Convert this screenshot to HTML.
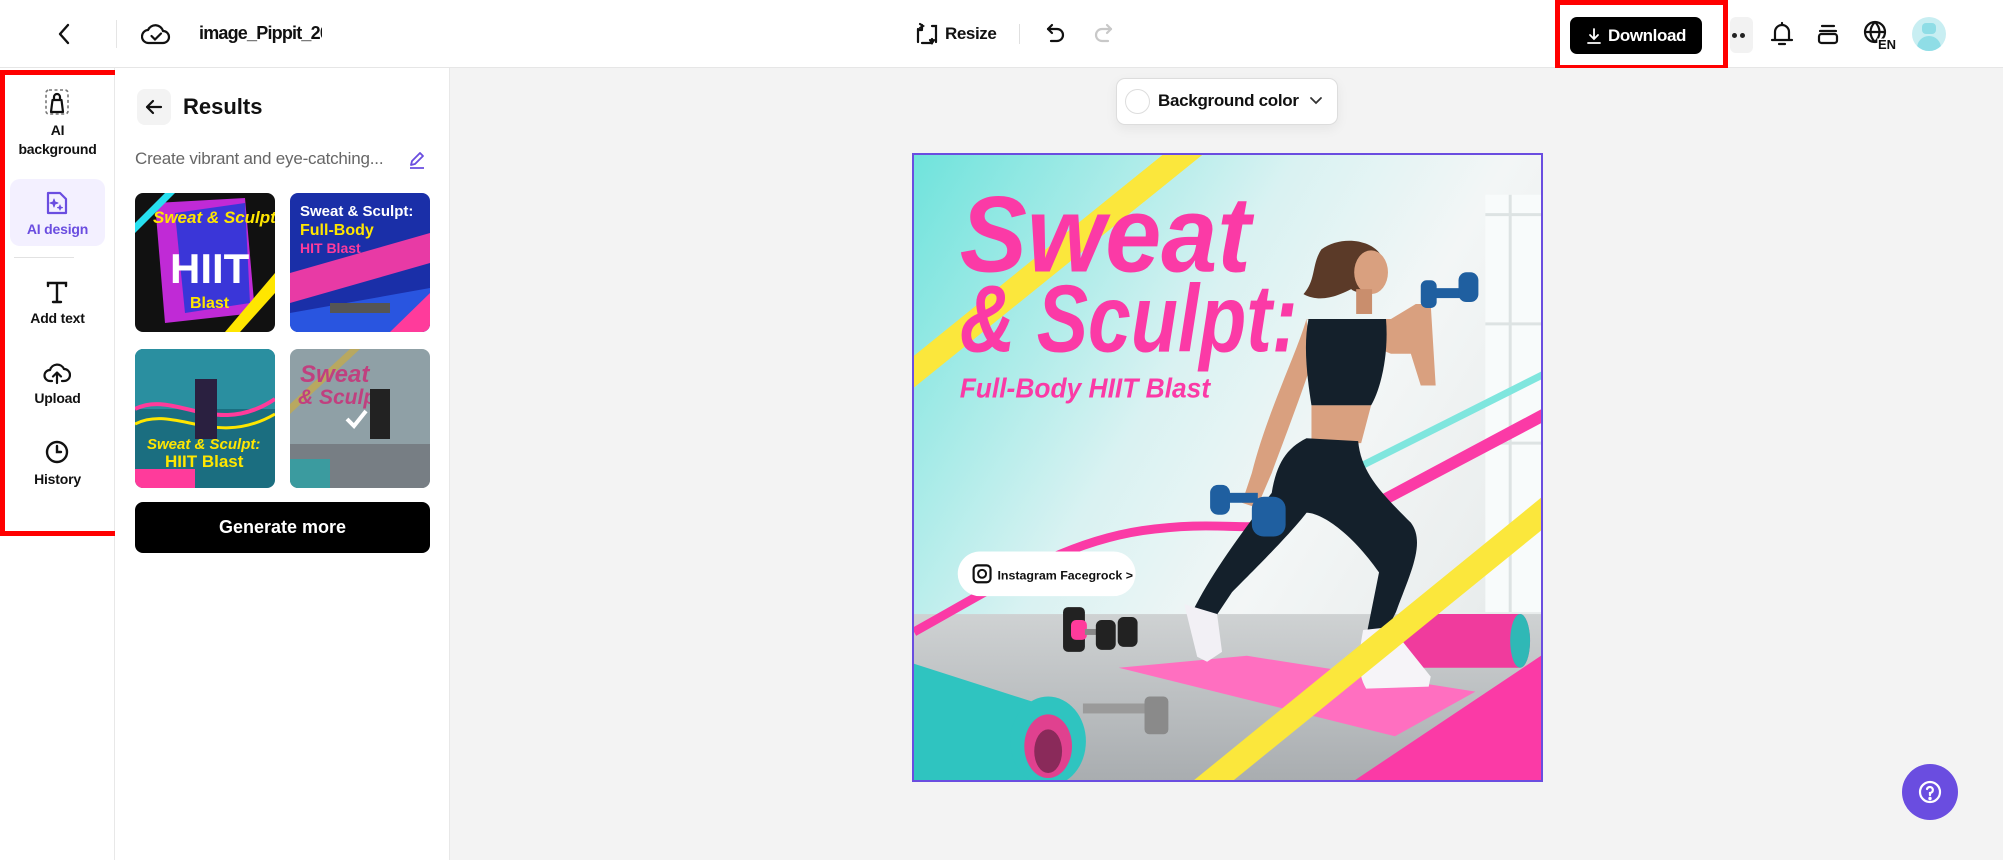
<!DOCTYPE html>
<html><head><meta charset="utf-8"><style>
*{box-sizing:border-box;margin:0;padding:0}
body{width:2003px;height:860px;overflow:hidden;background:#fff;font-family:"Liberation Sans",sans-serif;position:relative;color:#111}
.abs{position:absolute}
.hdr{left:0;top:0;width:2003px;height:68px;border-bottom:1px solid #e6e6e6;background:#fff}
.side{left:0;top:68px;width:115px;height:792px;border-right:1px solid #e8e8e8;background:#fff}
.panel{left:115px;top:68px;width:335px;height:792px;border-right:1px solid #e8e8e8;background:#fff}
.canvas{left:450px;top:68px;width:1553px;height:792px;background:#f3f3f3}
.lbl{width:115px;text-align:center;font-size:14px;font-weight:bold;color:#111;line-height:19px;letter-spacing:-0.2px}
.thumb{width:140px;height:139px;border-radius:8px;overflow:hidden}
</style></head><body>
<div class="abs hdr"></div>
<svg class="abs" style="left:54px;top:22px" width="22" height="24" viewBox="0 0 22 24"><path d="M14 3 L6 12 L14 21" fill="none" stroke="#111" stroke-width="2.4" stroke-linecap="round" stroke-linejoin="round"/></svg>
<div class="abs" style="left:116px;top:20px;width:1px;height:28px;background:#e5e5e5"></div>
<svg class="abs" style="left:141px;top:21px" width="30" height="26" viewBox="0 0 30 26"><path d="M8 22 H22 A6 6 0 0 0 22 10 A8 8 0 0 0 7 9 A6.5 6.5 0 0 0 8 22Z" fill="none" stroke="#111" stroke-width="2.2"/><path d="M10.5 15 L14 18.5 L20 12.5" fill="none" stroke="#111" stroke-width="2.2" stroke-linecap="round"/></svg>
<div class="abs" style="left:199px;top:23px;width:123px;overflow:hidden;white-space:nowrap;font-size:18px;font-weight:bold;color:#111;letter-spacing:-0.8px">image_Pippit_2025</div>
<svg class="abs" style="left:915px;top:22px" width="24" height="24" viewBox="0 0 24 24" fill="none" stroke="#111" stroke-width="2.2" stroke-linecap="round"><path d="M3 7 V20 M3 8 H7 M17 4 H21 V20 M7 21 H17 M7 3 L7 7 M17 17 V21"/><path d="M5 2 L8 4 L5 6" /><path d="M19 18 L17 21 L15 18"/></svg>
<div class="abs" style="left:945px;top:24px;font-size:17px;font-weight:bold;letter-spacing:-0.4px">Resize</div>
<div class="abs" style="left:1019px;top:24px;width:1px;height:20px;background:#e0e0e0"></div>
<svg class="abs" style="left:1044px;top:22px" width="24" height="24" viewBox="0 0 24 24" fill="none" stroke="#111" stroke-width="2.2" stroke-linecap="round" stroke-linejoin="round"><path d="M8 3 L4 7 L8 11"/><path d="M4 7 H13 A6 6 0 0 1 13 19 H7"/></svg>
<svg class="abs" style="left:1091px;top:22px" width="24" height="24" viewBox="0 0 24 24" fill="none" stroke="#c8c8c8" stroke-width="2.2" stroke-linecap="round" stroke-linejoin="round"><path d="M16 3 L20 7 L16 11"/><path d="M20 7 H11 A6 6 0 0 0 11 19 H17"/></svg>
<div class="abs" style="left:1555px;top:0;width:173px;height:70px;border:5px solid #f00"></div>
<div class="abs" style="left:1570px;top:17px;width:132px;height:37px;background:#000;border-radius:7px;color:#fff;font-weight:bold;font-size:17px;line-height:37px;text-align:left;padding-left:38px;letter-spacing:-0.4px">Download</div>
<svg class="abs" style="left:1586px;top:27px" width="16" height="18" viewBox="0 0 16 18" fill="none" stroke="#fff" stroke-width="1.8" stroke-linecap="round"><path d="M8 2 V11 M4 8 L8 12 L12 8 M2 16 H14"/></svg>
<div class="abs" style="left:1730px;top:17px;width:23px;height:36px;background:#f2f2f2;border-radius:6px"></div>
<div class="abs" style="left:1732px;top:33px;width:5px;height:5px;border-radius:3px;background:#222"></div>
<div class="abs" style="left:1740px;top:33px;width:5px;height:5px;border-radius:3px;background:#222"></div>
<svg class="abs" style="left:1768px;top:20px" width="28" height="28" viewBox="0 0 28 28" fill="none" stroke="#111" stroke-width="2.2" stroke-linecap="round"><path d="M7 20 V12 A7 7 0 0 1 21 12 V20 M4 20 H24 M11 24 H17 M14 3 V5"/></svg>
<svg class="abs" style="left:1815px;top:21px" width="26" height="26" viewBox="0 0 26 26" fill="none" stroke="#111" stroke-width="2.2" stroke-linecap="round"><path d="M7 5 H19 M5 10 H21"/><rect x="4" y="13" width="18" height="9" rx="2.5"/></svg>
<svg class="abs" style="left:1862px;top:19px" width="36" height="32" viewBox="0 0 36 32" fill="none" stroke="#111" stroke-width="2.2"><circle cx="13" cy="13" r="10"/><path d="M3 13 H23 M13 3 C7 9 7 17 13 23 M13 3 C19 9 19 17 13 23"/><text x="16" y="30" font-family="Liberation Sans" font-weight="bold" font-size="13" fill="#111" stroke="#fff" stroke-width="3" paint-order="stroke">EN</text></svg>
<div class="abs" style="left:1912px;top:17px;width:34px;height:34px;border-radius:50%;background:#c8eef2;overflow:hidden"><div class="abs" style="left:10px;top:6px;width:14px;height:11px;border-radius:4px;background:#8fdde6"></div><div class="abs" style="left:5px;top:19px;width:24px;height:18px;border-radius:12px 12px 0 0;background:#8fdde6"></div></div>

<div class="abs side"></div>
<div class="abs" style="left:0;top:70px;width:128px;height:466px;border:5px solid #f00"></div>
<svg class="abs" style="left:44px;top:88px" width="26" height="28" viewBox="0 0 26 28" fill="none" stroke="#111"><rect x="2" y="2" width="22" height="24" rx="3" stroke-dasharray="3 2.5" stroke-width="1.6" stroke="#777"/><path d="M7 24 L8.5 12 H17.5 L19 24 Z M10 12 V9 A3 3 0 0 1 16 9 V12" stroke-width="2.2" stroke-linejoin="round"/></svg>
<div class="abs lbl" style="left:0;top:121px;line-height:19px">AI<br>background</div>
<div class="abs" style="left:10px;top:179px;width:95px;height:67px;border-radius:10px;background:#f3f0ff"></div>
<svg class="abs" style="left:44px;top:190px" width="26" height="26" viewBox="0 0 26 26" fill="none" stroke="#6a4de0" stroke-width="2.2" stroke-linejoin="round"><path d="M4 3 H16 L22 9 V23 H4 Z"/><path d="M10 9 L11 12 L14 13 L11 14 L10 17 L9 14 L6 13 L9 12Z M16 15 L16.6 17 L18.5 17.6 L16.6 18.2 L16 20 L15.4 18.2 L13.5 17.6 L15.4 17Z" fill="#6a4de0" stroke-width="1"/></svg>
<div class="abs lbl" style="left:0;top:220px;color:#6a4de0">AI design</div>
<div class="abs" style="left:14px;top:257px;width:60px;height:1px;background:#e2e2e2"></div>
<svg class="abs" style="left:44px;top:279px" width="26" height="26" viewBox="0 0 26 26" fill="none" stroke="#111" stroke-width="2.4" stroke-linecap="round"><path d="M4 7 V4 H22 V7 M13 4 V23 M9 23 H17"/></svg>
<div class="abs lbl" style="left:0;top:309px">Add text</div>
<svg class="abs" style="left:43px;top:360px" width="28" height="26" viewBox="0 0 28 26" fill="none" stroke="#111" stroke-width="2.2" stroke-linecap="round" stroke-linejoin="round"><path d="M9 21 H7 A5.5 5.5 0 0 1 7 10 A7.5 7.5 0 0 1 21 9 A5.5 5.5 0 0 1 21 21 H19"/><path d="M14 23 V13 M10 16.5 L14 12.5 L18 16.5"/></svg>
<div class="abs lbl" style="left:0;top:389px">Upload</div>
<svg class="abs" style="left:44px;top:439px" width="26" height="26" viewBox="0 0 26 26" fill="none" stroke="#111" stroke-width="2.4" stroke-linecap="round"><circle cx="13" cy="13" r="10"/><path d="M13 7 V13 H17"/></svg>
<div class="abs lbl" style="left:0;top:470px">History</div>

<div class="abs panel"></div>
<div class="abs" style="left:137px;top:89px;width:34px;height:36px;border-radius:8px;background:#f3f3f3"></div>
<svg class="abs" style="left:144px;top:97px" width="20" height="20" viewBox="0 0 20 20" fill="none" stroke="#111" stroke-width="2.2" stroke-linecap="round" stroke-linejoin="round"><path d="M17 10 H3 M9 4 L3 10 L9 16"/></svg>
<div class="abs" style="left:183px;top:94px;font-size:22px;font-weight:bold">Results</div>
<div class="abs" style="left:135px;top:149px;font-size:17px;color:#666;letter-spacing:-0.2px">Create vibrant and eye-catching...</div>
<svg class="abs" style="left:408px;top:151px" width="18" height="18" viewBox="0 0 18 18" fill="none" stroke="#6a4de0" stroke-width="1.8" stroke-linejoin="round"><path d="M3 14 L4 10 L12 2 L15 5 L7 13 Z M2 17 H16"/></svg>

<svg class="abs thumb" style="left:135px;top:193px" viewBox="0 0 140 139"><rect width="140" height="139" fill="#111"/><polygon points="20,10 110,5 120,120 30,130" fill="#c02ad6"/><polygon points="40,20 110,10 115,110 50,120" fill="#3a36d8"/><polygon points="0,30 30,0 40,0 0,40" fill="#27e0f0"/><polygon points="90,139 140,80 140,100 105,139" fill="#ffe600"/><text x="18" y="30" font-family="Liberation Sans" font-weight="bold" font-style="italic" font-size="17" fill="#ffe600">Sweat &amp; Sculpt:</text><text x="35" y="90" font-family="Liberation Sans" font-weight="bold" font-size="42" fill="#fff">HIIT</text><text x="55" y="115" font-family="Liberation Sans" font-weight="bold" font-size="16" fill="#ffe600">Blast</text></svg>
<svg class="abs thumb" style="left:290px;top:193px" viewBox="0 0 140 139"><rect width="140" height="139" fill="#1a2fa8"/><polygon points="0,80 140,40 140,70 0,110" fill="#e83aa5"/><polygon points="0,120 140,95 140,139 0,139" fill="#2955e0"/><polygon points="100,139 140,100 140,139" fill="#ff3b9b"/><text x="10" y="23" font-family="Liberation Sans" font-weight="bold" font-size="15" fill="#fff">Sweat &amp; Sculpt:</text><text x="10" y="42" font-family="Liberation Sans" font-weight="bold" font-size="16" fill="#ffe600">Full-Body</text><text x="10" y="60" font-family="Liberation Sans" font-weight="bold" font-size="14" fill="#ff3b9b">HIT Blast</text><rect x="40" y="110" width="60" height="10" fill="#555"/></svg>
<svg class="abs thumb" style="left:135px;top:349px" viewBox="0 0 140 139"><rect width="140" height="139" fill="#1b6e80"/><rect width="140" height="60" fill="#2a8fa0"/><path d="M0 60 C40 40 80 90 140 50" stroke="#ff3b9b" stroke-width="4" fill="none"/><path d="M0 75 C40 55 80 100 140 65" stroke="#ffe600" stroke-width="3" fill="none"/><rect x="60" y="30" width="22" height="60" fill="#2a2040"/><text x="12" y="100" font-family="Liberation Sans" font-weight="bold" font-style="italic" font-size="15" fill="#ffe600">Sweat &amp; Sculpt:</text><text x="30" y="118" font-family="Liberation Sans" font-weight="bold" font-size="17" fill="#ffe600">HIIT Blast</text><rect x="0" y="120" width="60" height="19" fill="#ff3b9b"/></svg>
<svg class="abs thumb" style="left:290px;top:349px" viewBox="0 0 140 139"><rect width="140" height="139" fill="#8fa0a6"/><rect y="95" width="140" height="44" fill="#777e84"/><polygon points="0,55 60,0 70,0 0,65" fill="#b8a860"/><text x="10" y="33" font-family="Liberation Sans" font-weight="bold" font-style="italic" font-size="24" fill="#c0407f">Sweat</text><text x="8" y="55" font-family="Liberation Sans" font-weight="bold" font-style="italic" font-size="21" fill="#c0407f">&amp; Sculpt:</text><rect x="80" y="40" width="20" height="50" fill="#222"/><rect x="0" y="110" width="40" height="29" fill="#3b9b9f"/><path d="M57 70 L64 77 L76 62" stroke="#fff" stroke-width="4" fill="none"/></svg>

<div class="abs" style="left:135px;top:502px;width:295px;height:51px;border-radius:8px;background:#000;color:#fff;font-weight:bold;font-size:18px;text-align:center;line-height:51px">Generate more</div>

<div class="abs canvas"></div>
<div class="abs" style="left:1116px;top:78px;width:222px;height:47px;border-radius:9px;background:#fff;border:1px solid #ddd;box-shadow:0 4px 12px rgba(0,0,0,0.06)"></div>
<div class="abs" style="left:1125px;top:89px;width:25px;height:25px;border-radius:50%;border:1px solid #ddd"></div>
<div class="abs" style="left:1158px;top:91px;font-size:17px;font-weight:bold;letter-spacing:-0.3px">Background color</div>
<svg class="abs" style="left:1308px;top:94px" width="16" height="14" viewBox="0 0 16 14" fill="none" stroke="#333" stroke-width="1.8" stroke-linecap="round"><path d="M3 4 L8 9 L13 4"/></svg>

<svg class="abs" style="left:912px;top:153px;border:2px solid #6a4de0" width="631" height="629" viewBox="0 0 631 629">
<defs>
<linearGradient id="wall" x1="0" y1="0" x2="1" y2="0.6"><stop offset="0" stop-color="#6fe3dc"/><stop offset="0.45" stop-color="#d9f2f2"/><stop offset="0.7" stop-color="#f3f6f6"/><stop offset="1" stop-color="#e8ecec"/></linearGradient>
<linearGradient id="floor" x1="0" y1="0" x2="0" y2="1"><stop offset="0" stop-color="#cfd2d3"/><stop offset="1" stop-color="#a9adb0"/></linearGradient>
</defs>
<rect width="631" height="629" fill="url(#wall)"/>
<rect x="575" y="40" width="56" height="420" fill="#f8fbfb"/><path d="M575 60 H631 M575 170 H631 M575 290 H631 M600 40 V460" stroke="#dde3e3" stroke-width="3"/>
<rect y="462" width="631" height="167" fill="url(#floor)"/>
<polygon points="0,202 250,0 290,0 0,234" fill="#fbe73c"/>
<path d="M0 480 C90 430 150 390 230 378 C300 368 330 378 360 372" stroke="#fb3aa6" stroke-width="9" fill="none"/>
<polygon points="444,312 631,218 631,226 444,320" fill="#7fe6de"/>
<polygon points="468,343 631,256 631,270 468,356" fill="#fb3aa6"/>
<rect x="150" y="455" width="22" height="45" rx="5" fill="#222"/><rect x="158" y="468" width="16" height="20" rx="5" fill="#ff3b9b"/><rect x="172" y="477" width="25" height="6" fill="#888"/><rect x="183" y="468" width="20" height="30" rx="6" fill="#222"/><rect x="205" y="465" width="20" height="30" rx="6" fill="#222"/>
<polygon points="206,516 335,504 565,540 484,585" fill="#ff6fc0"/>
<path d="M488 462 H610 A10 27 0 0 1 610 516 H488 Z" fill="#f03b9d"/><ellipse cx="610" cy="489" rx="10" ry="27" fill="#2fb8b6"/>
<rect x="170" y="552" width="70" height="10" fill="#9a9a9a"/><rect x="232" y="545" width="24" height="38" rx="5" fill="#8a8a8a"/>
<path d="M0 512 L150 560 A30 45 0 0 1 150 629 L0 629Z" fill="#2fc4c0"/><ellipse cx="135" cy="590" rx="38" ry="45" fill="#2fc4c0"/><ellipse cx="135" cy="595" rx="24" ry="32" fill="#e0418f"/><ellipse cx="135" cy="600" rx="14" ry="22" fill="#8a2a5a"/>
<g>
<path d="M410 95 C430 80 465 85 472 105 L470 130 C460 140 445 140 440 135 C430 140 410 150 392 140 C405 125 400 110 410 95Z" fill="#5b3a28"/>
<ellipse cx="460" cy="118" rx="17" ry="22" fill="#d9a07f"/>
<rect x="445" y="135" width="16" height="25" fill="#c98e6d"/>
<path d="M395 165 L480 165 L505 150 L520 150 L525 232 L510 232 L500 200 L480 200 Z" fill="#d9a07f"/>
<path d="M395 165 C385 200 355 260 340 320 L330 350 L345 355 L360 320 C375 280 390 240 400 210Z" fill="#d9a07f"/>
<rect x="510" y="126" width="16" height="28" rx="6" fill="#1f5fa0"/><rect x="524" y="134" width="30" height="10" fill="#1f5fa0"/><rect x="548" y="118" width="20" height="30" rx="8" fill="#1f5fa0"/>
<path d="M397 165 L475 165 C478 200 470 235 460 252 L400 252 C395 220 392 190 397 165Z" fill="#14202b"/>
<path d="M400 252 L460 252 L450 290 L400 290 Z" fill="#d9a07f"/>
<path d="M395 285 L447 288 C450 320 470 340 500 370 C515 390 500 420 485 460 L470 490 L455 485 L468 420 C440 380 410 360 395 360 C380 380 340 420 320 440 L300 470 L280 460 C300 420 330 380 360 340 C365 310 375 295 395 285Z" fill="#14202b"/>
<path d="M272 452 L305 462 L310 500 L295 510 L285 505 Z" fill="#f2f0f5"/>
<path d="M452 478 L480 475 L520 525 L518 535 L455 537 C445 520 448 500 452 478Z" fill="#f6f4f8"/>
<rect x="298" y="332" width="20" height="30" rx="8" fill="#1f5fa0"/><rect x="316" y="340" width="30" height="10" fill="#1f5fa0"/><rect x="340" y="344" width="34" height="40" rx="12" fill="#1f5fa0"/>
</g>
<polygon points="282,629 631,345 631,378 322,629" fill="#fbe73c"/>
<polygon points="444,629 631,504 631,629" fill="#fb3aa6"/>
<text x="46" y="117" font-family="Liberation Sans" font-weight="bold" font-style="italic" font-size="108" fill="#fb3aa6" textLength="293" lengthAdjust="spacingAndGlyphs">Sweat</text>
<text x="46" y="198" font-family="Liberation Sans" font-weight="bold" font-style="italic" font-size="96" fill="#fb3aa6" textLength="340" lengthAdjust="spacingAndGlyphs">&amp; Sculpt:</text>
<text x="46" y="244" font-family="Liberation Sans" font-weight="bold" font-style="italic" font-size="28" fill="#fb3aa6" textLength="252" lengthAdjust="spacingAndGlyphs">Full-Body HIIT Blast</text>
<rect x="44" y="399" width="179" height="45" rx="22.5" fill="#fff"/>
<rect x="60" y="413" width="17" height="17" rx="4" fill="none" stroke="#111" stroke-width="2.2"/><circle cx="68.5" cy="421.5" r="4" fill="none" stroke="#111" stroke-width="2"/>
<text x="84" y="427" font-family="Liberation Sans" font-weight="bold" font-size="12.5" fill="#111">Instagram Facegrock &gt;</text>
</svg>

<div class="abs" style="left:1902px;top:764px;width:56px;height:56px;border-radius:50%;background:#6a4de0"></div>
<svg class="abs" style="left:1916px;top:778px" width="28" height="28" viewBox="0 0 28 28" fill="none" stroke="#fff" stroke-width="2.2" stroke-linecap="round"><circle cx="14" cy="14" r="10"/><path d="M11 11 A3 3 0 1 1 14 15 V17"/><circle cx="14" cy="20.5" r="0.6" fill="#fff"/></svg>
</body></html>
